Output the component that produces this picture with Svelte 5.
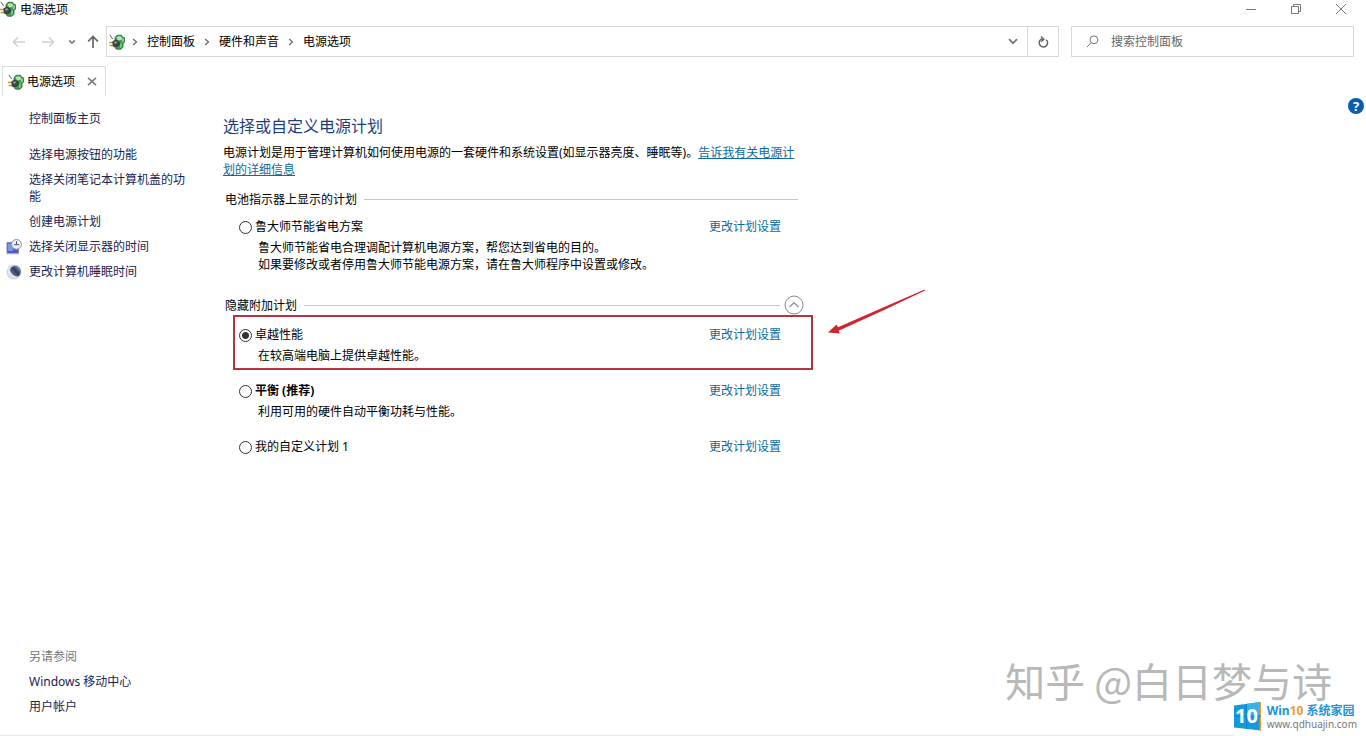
<script lang="ts">
  interface Plan {
    id: string;
    name: string;
    lines: string[];
    recommended?: boolean;
  }

  const crumbs = ["控制面板", "硬件和声音", "电源选项"];

  const tasks = [
    { text: "选择电源按钮的功能", icon: "" },
    { text: "选择关闭笔记本计算机盖的功能", icon: "" },
    { text: "创建电源计划", icon: "" },
    { text: "选择关闭显示器的时间", icon: "display" },
    { text: "更改计算机睡眠时间", icon: "sleep" },
  ];

  const shownPlans: Plan[] = [
    {
      id: "ludashi",
      name: "鲁大师节能省电方案",
      lines: [
        "鲁大师节能省电合理调配计算机电源方案，帮您达到省电的目的。",
        "如果要修改或者停用鲁大师节能电源方案，请在鲁大师程序中设置或修改。",
      ],
    },
  ];

  const extraPlans: Plan[] = [
    { id: "ultimate", name: "卓越性能", lines: ["在较高端电脑上提供卓越性能。"] },
    { id: "balanced", name: "平衡 (推荐)", lines: ["利用可用的硬件自动平衡功耗与性能。"], recommended: true },
    { id: "custom", name: "我的自定义计划 1", lines: [] },
  ];

  let selected = $state("ultimate");
  let expanded = $state(true);
  let query = $state("");
</script>

{#snippet powerIcon()}
  <svg class="power" width="16" height="16" viewBox="0 0 16 16" aria-hidden="true">
    <path d="M6.500 3 8 1.300h4.500L13.500 3l2 .8v4.400L14 9.500v3.700L12 15.200H7.500L6 13.500V4z" fill="#3fa04f" stroke="#2a6237" stroke-width=".8" />
    <path d="M7.500 3.200c1.700-1.200 4-1.200 5.300 0v2.600L9 6.500z" fill="#b4e6ae" />
    <path d="M13.500 4.500h1v3l-1 .8z" fill="#e4f4e2" />
    <path d="M11 10c1-.2 1.500-.8 1.800-1.500v4.300l-1.800 1.500z" fill="#79cc7e" />
    <path d="m.8.8 3 4.400" stroke="#596168" />
    <path d="M0 8.500h4M.6 11.600h4" stroke="#b89b3b" stroke-width="1.500" />
    <path d="M3.800 7.600 6.500 6.200 10 7.400l.4 3.600L8 12.600l-3.800-.4z" fill="#45464b" stroke="#222529" stroke-width=".7" />
    <path d="M4.800 8.300 6.700 7.200l1.900.9L6.300 10z" fill="#98999e" />
  </svg>
{/snippet}

{#snippet chevron()}
  <svg class="chevron" width="6" height="8" viewBox="0 0 6 8" aria-hidden="true">
    <path d="M1.2 1 4.4 4 1.2 7" fill="none" stroke="#707070" stroke-width="1.4" />
  </svg>
{/snippet}

{#snippet planItem(plan: Plan)}
  <li class="plan" class:marked={plan.id === "ultimate"}>
    <div class="plan-row">
      <input type="radio" name="plan" id={plan.id} value={plan.id} bind:group={selected} />
      <label for={plan.id} class:recommended={plan.recommended}>{plan.name}</label>
      <a href="#{plan.id}">更改计划设置</a>
    </div>
    {#if plan.lines.length}
      <p class="description">
        {#each plan.lines as line}
          <span>{line}</span>
        {/each}
      </p>
    {/if}
    {#if plan.id === "ultimate"}
      <svg class="arrow" width="100" height="46" viewBox="0 0 100 46" aria-hidden="true">
        <path d="M98 1.600 97.600.6 55 19 11 38.200 9.600 35.600 1 43.500l11.800.9-1.200-2.600L56 21.600z" fill="#d2232f" />
      </svg>
    {/if}
  </li>
{/snippet}

<div class="window">
  <header class="titlebar">
    {@render powerIcon()}
    <span>电源选项</span>
    <div class="controls">
      <button aria-label="最小化">
        <svg width="12" height="12" viewBox="0 0 12 12"><path d="M1 6.5h10" /></svg>
      </button>
      <button aria-label="还原">
        <svg width="12" height="12" viewBox="0 0 12 12"><path d="M1.5 3.5h7v7h-7zM3.5 3.5v-2h7v7h-2" /></svg>
      </button>
      <button aria-label="关闭">
        <svg width="12" height="12" viewBox="0 0 12 12"><path d="m1 1 10 10M11 1 1 11" /></svg>
      </button>
    </div>
  </header>

  <div class="toolbar">
    <nav class="history">
      <button aria-label="后退" disabled>
        <svg width="14" height="12" viewBox="0 0 14 12"><path d="M13 6H1.5M6 1.2 1.4 6 6 10.8" stroke="#cfcfcf" stroke-width="1.3" /></svg>
      </button>
      <button aria-label="前进" disabled>
        <svg width="14" height="12" viewBox="0 0 14 12"><path d="M1 6h11.5M8 1.2 12.6 6 8 10.8" stroke="#cfcfcf" stroke-width="1.3" /></svg>
      </button>
      <button class="recent" aria-label="最近浏览的位置">
        <svg width="8" height="6" viewBox="0 0 8 6"><path d="m1.2 1.4 2.8 2.7 2.8-2.7" stroke="#777" stroke-width="1.5" /></svg>
      </button>
      <button class="up" aria-label="向上">
        <svg width="12" height="13" viewBox="0 0 12 13"><path d="M6 13V1.6M1.2 6.3 6 1.4l4.8 4.9" stroke="#666" stroke-width="1.7" /></svg>
      </button>
    </nav>
    <div class="address">
      {@render powerIcon()}
      <ol>
        {#each crumbs as crumb}
          <li>{@render chevron()}<a href="#{crumb}">{crumb}</a></li>
        {/each}
      </ol>
      <button class="dropdown" aria-label="以前的位置">
        <svg width="10" height="7" viewBox="0 0 10 7"><path d="m1 1.2 4 4 4-4" stroke="#777" stroke-width="1.8" /></svg>
      </button>
      <button class="refresh" aria-label="刷新">
        <svg width="12" height="12" viewBox="0 0 12 12">
          <path d="M9.300 3.700A4.200 4.200 0 1 1 4.200 3.200h2.300" stroke="#666" stroke-width="1.500" />
          <path d="M4 .6 6.800 3.200 4.200 5.800" stroke="#666" stroke-width="1.400" />
        </svg>
      </button>
    </div>
    <label class="search">
      <svg width="13" height="13" viewBox="0 0 13 13" aria-hidden="true">
        <circle cx="8" cy="4.8" r="3.9" /><path d="M5.2 7.7.8 12.2" />
      </svg>
      <input type="text" placeholder="搜索控制面板" aria-label="搜索控制面板" bind:value={query} />
    </label>
  </div>

  <div class="tabs">
    <div class="tab">
      {@render powerIcon()}
      <span>电源选项</span>
      <button aria-label="关闭选项卡">
        <svg width="10" height="9" viewBox="0 0 10 9"><path d="m1 .8 8 7.4M9 .8 1 8.200" stroke="#808080" stroke-width="1.7" /></svg>
      </button>
    </div>
  </div>

  <div class="body">
    <aside>
      <a class="home" href="#home">控制面板主页</a>
      <ul>
        {#each tasks as task}
          <li>
            {#if task.icon === "display"}
              <svg width="16" height="16" viewBox="0 0 16 16" aria-hidden="true">
                <path d="M1 3.500h11.500v11H1z" fill="#4a5fc0" stroke="#7d86b4" />
                <path d="M2 4.500h5V12H2z" fill="#7c96e4" />
                <path d="M.5 14.800h12.500" stroke="#b9bfd6" />
                <circle cx="10.500" cy="5.400" r="4.900" fill="#eef1f4" stroke="#8c929c" />
                <path d="M10.500 2.200v3.500H8M10.500 5.700h2.800" fill="none" stroke="#4c5360" />
              </svg>
            {:else if task.icon === "sleep"}
              <svg width="16" height="16" viewBox="0 0 16 16" aria-hidden="true">
                <defs>
                  <linearGradient id="moon" x1="1" y1=".2" x2=".2" y2="1">
                    <stop offset="0" stop-color="#8fa1c4" />
                    <stop offset=".45" stop-color="#2c3c60" />
                    <stop offset="1" stop-color="#7585a5" />
                  </linearGradient>
                </defs>
                <circle cx="8" cy="8" r="7.500" fill="#ccd3de" />
                <circle cx="9.400" cy="7.300" r="5.500" fill="url(#moon)" />
                <path d="M3.600 2.800c-.4 5 3 9.200 8.400 10.400-5 2.400-10-.6-10.400-5.400-.1-2 .7-3.800 2-5z" fill="#e1e5ec" />
              </svg>
            {/if}
            <a href="#task">{task.text}</a>
          </li>
        {/each}
      </ul>
      <div class="see-also">
        <h2>另请参阅</h2>
        <a href="#mobility">Windows 移动中心</a>
        <a href="#accounts">用户帐户</a>
      </div>
    </aside>

    <main>
      <h1>选择或自定义电源计划</h1>
      <p class="intro">
        电源计划是用于管理计算机如何使用电源的一套硬件和系统设置(如显示器亮度、睡眠等)。<a href="#more">告诉我有关电源计划的详细信息</a>
      </p>

      <section>
        <div class="group-head"><h2>电池指示器上显示的计划</h2></div>
        <ul class="plans">
          {#each shownPlans as plan}
            {@render planItem(plan)}
          {/each}
        </ul>
      </section>

      <section>
        <div class="group-head collapsible">
          <h2>隐藏附加计划</h2>
          <button aria-label="隐藏附加计划" aria-expanded={expanded} onclick={() => (expanded = !expanded)}>
            <svg width="20" height="20" viewBox="0 0 20 20">
              <circle cx="10" cy="10" r="9" stroke="#8a8a8a" />
              <path d="M5.500 12 10 7.800l4.500 4.200" stroke="#999" stroke-width="1.400" />
            </svg>
          </button>
        </div>
        {#if expanded}
          <ul class="plans">
            {#each extraPlans as plan}
              {@render planItem(plan)}
            {/each}
          </ul>
        {/if}
      </section>
    </main>

    <button class="help" aria-label="帮助">?</button>
  </div>

  <div class="watermark">知乎 @白日梦与诗</div>
  <div class="site">
    <svg width="28" height="29" viewBox="0 0 28 29" aria-hidden="true">
      <path d="M0 3.500 27 0v28.500L0 25.500z" fill="#1598dc" />
      <path d="M13 1.800 27 0v13l-14 1z" fill="#35b2ec" />
      <path d="M25.600.2 27 0v28.500l-1.400-.2z" fill="#f39a1e" />
      <path d="M0 14.200h27M12.500 2v25" stroke="#0c7fc2" stroke-width=".8" />
      <text x="1" y="21" font-size="20" font-weight="700" fill="#fff">10</text>
    </svg>
    <div>
      <strong>Win<em>10</em> 系统家园</strong>
      <small>www.qdhuajin.com</small>
    </div>
  </div>
</div>

<style>
  :global(body) {
    background: #fff;
  }

  .window {
    position: relative;
    display: flex;
    flex-direction: column;
    box-sizing: border-box;
    min-height: 100vh;
    border-bottom: 1px solid #e6e6e6;
    font: 12px/17px "Noto Sans", "Noto Sans CJK SC", sans-serif;
    color: #000;
  }

  h1,
  h2,
  p,
  ul,
  ol {
    margin: 0;
    padding: 0;
    font-size: inherit;
    font-weight: 400;
    list-style: none;
  }

  a {
    color: #0f6a9e;
    text-decoration: none;
  }

  button {
    display: flex;
    align-items: center;
    justify-content: center;
    padding: 0;
    border: none;
    background: none;
    font: inherit;
  }

  button svg {
    fill: none;
  }

  svg {
    flex: none;
  }

  .titlebar {
    display: flex;
    align-items: center;
    gap: 4px;
    height: 18px;
  }

  .controls {
    display: flex;
    margin-left: auto;
    padding-right: 3px;
  }

  .controls button {
    width: 45px;
    height: 17px;
  }

  .controls svg {
    stroke: #777;
  }

  .toolbar {
    display: flex;
    height: 31px;
    margin-top: 8px;
    padding-right: 12px;
  }

  .history {
    display: flex;
    align-items: center;
    width: 106px;
    padding-left: 12px;
    box-sizing: border-box;
  }

  .history button {
    width: 14px;
    height: 28px;
    margin-right: 15px;
  }

  .history .recent {
    width: 8px;
    margin-right: 11px;
    margin-left: -2px;
  }

  .history .up {
    width: 12px;
    margin-right: 0;
  }

  .address {
    display: flex;
    flex: 1;
    align-items: center;
    padding-left: 2px;
    border: 1px solid #d9d9d9;
  }

  .address ol {
    display: flex;
    flex: 1;
    gap: 2px;
  }

  .address li {
    display: flex;
    align-items: center;
  }

  .address li a {
    color: #000;
  }

  .chevron {
    margin: 0 9px 0 7px;
  }

  .dropdown {
    width: 29px;
    height: 29px;
  }

  .refresh {
    width: 31px;
    height: 29px;
    border-left: 1px solid #d9d9d9;
  }

  .search {
    display: flex;
    align-items: center;
    gap: 12px;
    width: 283px;
    margin-left: 12px;
    padding-left: 14px;
    box-sizing: border-box;
    border: 1px solid #d9d9d9;
  }

  .search svg {
    fill: none;
    stroke: #777;
  }

  .search input {
    flex: 1;
    min-width: 0;
    padding: 0;
    border: none;
    outline: none;
    background: none;
    font: inherit;
  }

  .search input::placeholder {
    color: #666;
    opacity: 1;
  }

  .tabs {
    display: flex;
    margin-top: 9px;
    padding-left: 2px;
  }

  .tab {
    display: flex;
    align-items: center;
    height: 29px;
    padding: 0 8px 0 5px;
    border: 1px solid #dcdcdc;
    border-bottom: none;
  }

  .tab span {
    margin: 0 12px 0 3px;
  }

  .body {
    display: flex;
    flex: 1;
    align-items: stretch;
  }

  aside {
    display: flex;
    flex-direction: column;
    width: 223px;
    padding: 14px 32px 20px 6px;
    box-sizing: border-box;
  }

  aside a {
    color: #1a2350;
  }

  aside ul {
    display: flex;
    flex-direction: column;
    gap: 8px;
    margin-top: 19px;
  }

  aside li {
    display: flex;
    align-items: center;
    gap: 7px;
  }

  .home,
  .see-also,
  aside li a:only-child {
    padding-left: 23px;
  }

  .see-also {
    display: flex;
    flex-direction: column;
    gap: 8px;
    margin-top: auto;
  }

  .see-also h2 {
    color: #777;
  }

  main {
    width: 575px;
    padding-top: 19px;
  }

  h1 {
    font-size: 16px;
    line-height: 22px;
    color: #1c3f7c;
  }

  .intro {
    margin-top: 7px;
  }

  .intro a {
    text-decoration: underline;
  }

  section {
    margin-top: 11px;
  }

  section + section {
    margin-top: 22px;
  }

  .group-head {
    display: flex;
    align-items: center;
    gap: 7px;
    height: 20px;
    padding-left: 2px;
  }

  .group-head::after {
    content: "";
    order: 1;
    flex: 1;
    height: 1px;
    background: #c8c8c8;
  }

  .collapsible {
    margin-right: -6px;
  }

  .collapsible button {
    order: 2;
    margin-left: -3px;
  }

  .plans {
    display: flex;
    flex-direction: column;
    gap: 18px;
    margin-top: 9px;
    padding: 0 17px 0 16px;
  }

  .collapsible + .plans {
    margin-top: 11px;
  }

  .plan {
    position: relative;
  }

  .marked::before {
    content: "";
    position: absolute;
    inset: -11px -32px -6px -6px;
    border: 2px solid #b8323f;
    pointer-events: none;
  }

  .arrow {
    position: absolute;
    top: -37px;
    right: -146px;
  }

  .plan-row {
    display: flex;
    align-items: center;
    gap: 3px;
  }

  .plan-row a {
    margin-left: auto;
  }

  input[type="radio"] {
    appearance: none;
    position: relative;
    top: 1px;
    width: 13px;
    height: 13px;
    margin: 0;
    border: 1px solid #333;
    border-radius: 50%;
    background: #fff;
  }

  input[type="radio"]:checked {
    background: radial-gradient(circle, #333 3px, #fff 4px);
  }

  .recommended {
    font-weight: 700;
  }

  .description {
    margin-top: 4px;
    padding-left: 19px;
  }

  .description span {
    display: block;
  }

  .help {
    width: 16px;
    height: 16px;
    margin: 2px 2px 0 auto;
    border-radius: 50%;
    background: #0b5cad;
    font-size: 13px;
    font-weight: 700;
    line-height: 16px;
    color: #fff;
  }

  .watermark {
    position: absolute;
    right: 34px;
    bottom: 33px;
    font: 40px/44px "Noto Sans CJK SC", sans-serif;
    color: #b8b8b8;
  }

  .site {
    position: absolute;
    right: 0;
    bottom: -1px;
    display: flex;
    align-items: center;
    gap: 5px;
    padding: 0 9px 5px 0;
    background: #fff;
  }

  .site div {
    display: flex;
    flex-direction: column;
  }

  .site strong {
    font-size: 12px;
    line-height: 14px;
    color: #1b94d8;
  }

  .site em {
    font-style: normal;
    color: #f29a2e;
  }

  .site small {
    font: 10px/12px "Noto Sans", sans-serif;
    color: #777;
  }
</style>
